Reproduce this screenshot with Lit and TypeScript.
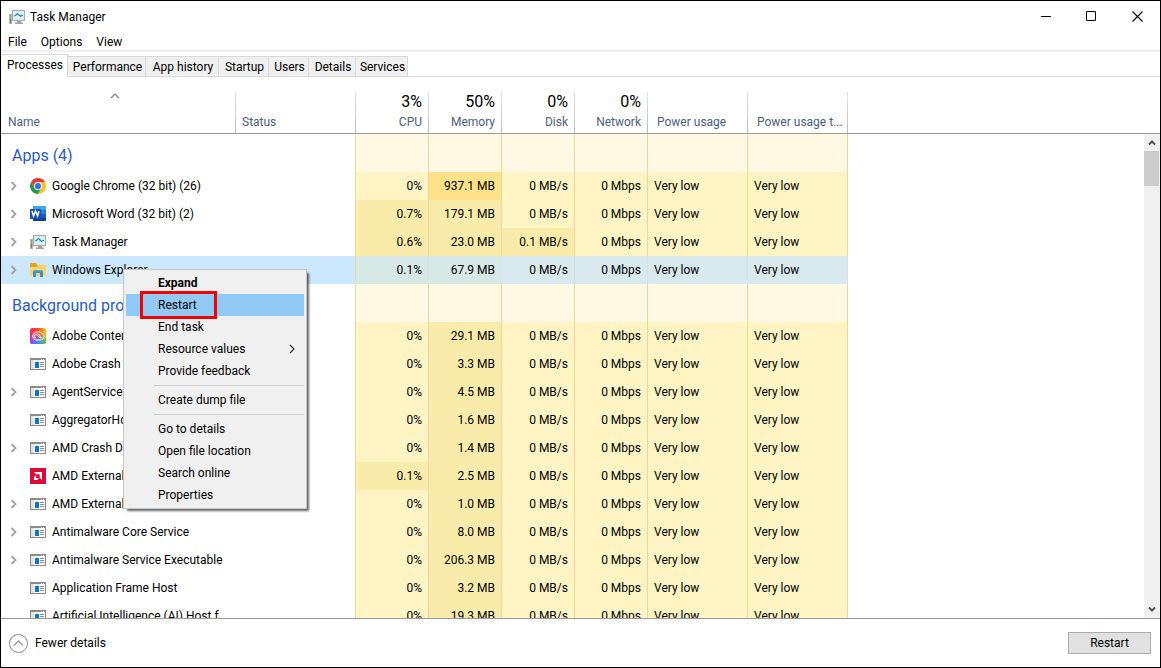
import { LitElement, html, css, svg, nothing } from "lit";
import { customElement, property, state } from "lit/decorators.js";
import { classMap } from "lit/directives/class-map.js";

type Heat = "low" | "mid" | "high";
interface Proc {
  name: string;
  icon: string;
  expandable: boolean;
  cpu: string;
  memory: string;
  disk?: string;
  cpuHeat?: Heat;
  memHeat?: Heat;
  diskHeat?: Heat;
  selected?: boolean;
}

const apps: Proc[] = [
  { name: "Google Chrome (32 bit) (26)", icon: "chrome", expandable: true, cpu: "0%", memory: "937.1 MB", memHeat: "high" },
  { name: "Microsoft Word (32 bit) (2)", icon: "word", expandable: true, cpu: "0.7%", memory: "179.1 MB", cpuHeat: "mid" },
  { name: "Task Manager", icon: "taskmgr", expandable: true, cpu: "0.6%", memory: "23.0 MB", disk: "0.1 MB/s", cpuHeat: "mid", diskHeat: "mid" },
  { name: "Windows Explorer", icon: "folder", expandable: true, cpu: "0.1%", memory: "67.9 MB", cpuHeat: "mid", selected: true },
];

const background: Proc[] = [
  { name: "Adobe Content Synchronizer", icon: "cloud", expandable: false, cpu: "0%", memory: "29.1 MB" },
  { name: "Adobe Crash Processor", icon: "exe", expandable: false, cpu: "0%", memory: "3.3 MB" },
  { name: "AgentService.exe", icon: "exe", expandable: true, cpu: "0%", memory: "4.5 MB" },
  { name: "AggregatorHost.exe", icon: "exe", expandable: false, cpu: "0%", memory: "1.6 MB" },
  { name: "AMD Crash Defender", icon: "exe", expandable: true, cpu: "0%", memory: "1.4 MB" },
  { name: "AMD External Events", icon: "amd", expandable: false, cpu: "0.1%", memory: "2.5 MB", cpuHeat: "mid" },
  { name: "AMD External Events", icon: "exe", expandable: true, cpu: "0%", memory: "1.0 MB" },
  { name: "Antimalware Core Service", icon: "exe", expandable: true, cpu: "0%", memory: "8.0 MB" },
  { name: "Antimalware Service Executable", icon: "exe", expandable: true, cpu: "0%", memory: "206.3 MB" },
  { name: "Application Frame Host", icon: "exe", expandable: false, cpu: "0%", memory: "3.2 MB" },
  { name: "Artificial Intelligence (AI) Host f", icon: "exe", expandable: false, cpu: "0%", memory: "19.3 MB" },
];

const glyphs: Record<string, unknown> = {
  chrome: svg`
    <circle cx="8" cy="8" r="8" fill="#fff"/>
    <path d="M8 4H14.93A8 8 0 0 1 8 16L11.46 10Z" fill="#fcc31e"/>
    <path d="M4.54 10 1.07 4A8 8 0 0 0 8 16L11.46 10Z" fill="#2a9a48"/>
    <path d="M1.07 4 4.54 10 8 4H14.93A8 8 0 0 0 1.07 4Z" fill="#e33b2e"/>
    <circle cx="8" cy="8" r="4" fill="#fff"/>
    <circle cx="8" cy="8" r="3.1" fill="#2f74e8"/>`,
  word: svg`
    <path d="M3 0h12a1 1 0 0 1 1 1v3H3z" fill="#41a5ee"/>
    <path d="M3 4h13v4H3z" fill="#2b7cd3"/>
    <path d="M3 8h13v4H3z" fill="#185abd"/>
    <path d="M3 12h13v2a1 1 0 0 1-1 1H3z" fill="#103f91"/>
    <rect x="0" y="3" width="11" height="10" rx=".8" fill="#1650b0"/>
    <path d="m2 5 1.500 5 2-5 2 5L9 5" fill="none" stroke="#fff" stroke-width="1.500"/>`,
  taskmgr: svg`
    <rect x="0" y="5" width="3" height="10" fill="#b4b4b4"/>
    <rect x="1" y="6" width="1" height="2" fill="#4fc04b"/>
    <rect x="1" y="9" width="1" height="5" fill="#7d7d7d"/>
    <rect x="3" y="1" width="13" height="11" fill="#a9a9a9"/>
    <rect x="4" y="2" width="11" height="9" fill="#e3e8ea"/>
    <rect x="5" y="3" width="9" height="7" fill="#d9f2fc"/>
    <path d="M5 7 6.500 6.500 8.500 4.500 11.500 7.500 12.500 6.500H14" fill="none" stroke="#258dbd" stroke-width="1.200"/>
    <path d="M8 12h4v1.500h2V15H6v-1.500h2z" fill="#a2a2a2"/>`,
  folder: svg`
    <path d="M0 1h6l1.500 2H16v11H0z" fill="#e8a41c"/>
    <path d="M0 5h7l1-2h8v11H0z" fill="#ffd464"/>
    <path d="M3 9.500 4.500 8h7L13 9.500V15h-3v-4H6v4H3z" fill="#3a8ddb"/>
    <path d="M3 9.500 4.500 8h7L13 9.500z" fill="#54a5e6"/>`,
  cloud: svg`
    <defs>
      <linearGradient id="warm" x1="0" y1="0" x2="1" y2="0">
        <stop offset="0" stop-color="#f42a5c"/><stop offset=".5" stop-color="#fb4a26"/>
        <stop offset="1" stop-color="#ffc414"/>
      </linearGradient>
      <linearGradient id="cool" x1="0" y1="0" x2="1" y2="0">
        <stop offset="0" stop-color="#a53ff0"/><stop offset=".5" stop-color="#3d8df5"/>
        <stop offset="1" stop-color="#4fcb46"/>
      </linearGradient>
      <linearGradient id="fade" x1="0" y1="0" x2="0" y2="1">
        <stop offset=".3" stop-color="#000"/><stop offset=".85" stop-color="#fff"/>
      </linearGradient>
      <mask id="lower"><rect width="16" height="16" fill="url(#fade)"/></mask>
    </defs>
    <rect width="16" height="16" rx="2.500" fill="url(#warm)"/>
    <rect width="16" height="16" rx="2.500" fill="url(#cool)" mask="url(#lower)"/>
    <path d="M6 12h4.500a3.700 3.700 0 0 0 .6-7.300A4.500 4.500 0 0 0 6 4.300 3.900 3.900 0 0 0 6 12Z" fill="none" stroke="#fff"/>
    <path d="M11.500 9.800H10.500C8.500 9.800 8 6.500 6 6.500a1.700 1.700 0 0 0 0 3.400M7.500 5.500c2 0 2 2.500 3.500 4.200" fill="none" stroke="#fff" stroke-width=".9"/>`,
  exe: svg`
    <rect x=".5" y="2.500" width="15" height="11" fill="#fff" stroke="#8a8a8a"/>
    <path d="M0 2h16v2H0z" fill="#8a8a8a"/>
    <path d="M11 3h1v1h-1zM13 3h1v1h-1z" fill="#ddd"/>
    <path d="M1 4h3v9H1z" fill="#e2e2e2"/>
    <path d="M5 6h4v6H5z" fill="#0078d7"/>
    <path d="M10 6h4v1h-4zM10 8h4v1h-4zM10 10h4v1h-4z" fill="#8f8f8f"/>`,
  amd: svg`
    <rect width="16" height="16" fill="#dc0a38"/>
    <path d="M4 4h8v8L9.700 9.700V6.300H6.300z" fill="#fff"/>
    <path d="M6 7v3h3l-2 2H4V9z" fill="#fff"/>`,
};

@customElement("tm-icon")
export class TmIcon extends LitElement {
  static styles = css`
    :host { display: block; flex: none; width: 16px; height: 16px; }
    .glyph { display: block; width: 16px; height: 16px; }
  `;
  @property() name = "exe";
  render() {
    return html`<svg class="glyph" viewBox="0 0 16 16" aria-hidden="true">${glyphs[this.name]}</svg>`;
  }
}

@customElement("tm-context-menu")
export class TmContextMenu extends LitElement {
  static styles = css`
    :host { display: block; }
    .menu {
      box-sizing: border-box; width: 184px; padding: 2px;
      background: #f0f0f0; border: 1px solid #c6c6c6;
      box-shadow: 3px 3px 2px -1px rgba(0, 0, 0, 0.6);
    }
    .item {
      position: relative; box-sizing: border-box; display: flex; align-items: center; justify-content: space-between;
      width: 100%; height: 22px; padding: 0 8px 0 32px; border: 0; background: none;
      font: inherit; color: #000; text-align: left; white-space: nowrap;
    }
    .item.default { font-weight: 700; }
    .item.hot { background: #91c9f7; }
    .arrow { width: 8px; height: 10px; }
    .separator { height: 1px; margin: 3px 0 3px 28px; border: 0; background: #d2d2d2; }
    .marker { position: absolute; inset: -3px auto -3px 14px; width: 71px; border: 3px solid #f40000; pointer-events: none; }
    .marked { z-index: 1; }
  `;
  render() {
    const item = (label: string, opts: { bold?: boolean; hot?: boolean; sub?: boolean } = {}) => html`
      <button role="menuitem" class=${classMap({ item: true, default: !!opts.bold, hot: !!opts.hot, marked: !!opts.hot })}>
        ${label}
        ${opts.sub ? html`<svg class="arrow" viewBox="0 0 8 10" aria-hidden="true"><path d="M2 1l4 4-4 4" fill="none" stroke="#333" stroke-width="1.200"/></svg>` : nothing}
        ${opts.hot ? html`<span class="marker"></span>` : nothing}
      </button>`;
    return html`
      <div class="menu" role="menu">
        ${item("Expand", { bold: true })}
        ${item("Restart", { hot: true })}
        ${item("End task")}
        ${item("Resource values", { sub: true })}
        ${item("Provide feedback")}
        <hr class="separator" />
        ${item("Create dump file")}
        <hr class="separator" />
        ${item("Go to details")}
        ${item("Open file location")}
        ${item("Search online")}
        ${item("Properties")}
      </div>`;
  }
}

@customElement("app-root")
export class AppRoot extends LitElement {
  static styles = css`
    :host {
      display: block; height: 100vh;
      font: 12px/16px Roboto, "Noto Sans", sans-serif; color: #000;
    }
    button { font: inherit; color: inherit; padding: 0; border: 0; background: none; }
    .window {
      position: relative; box-sizing: border-box; height: 100%;
      display: flex; flex-direction: column; background: #fff; border: 1px solid #000; overflow: hidden;
    }
    .titlebar { display: flex; align-items: center; height: 31px; padding-left: 8px; }
    .title { flex: 1; margin: 0 0 0 5px; font: inherit; }
    .control { width: 46px; height: 30px; display: grid; place-items: center; }
    .control-glyph { display: block; width: 11px; height: 11px; }
    .menubar { display: flex; gap: 14px; height: 17px; padding: 1px 7px 0; border-bottom: 2px solid #f0f0f0; }
    .tabs { display: grid; grid-template-columns: 67px 78px 73px 50px 40px 47px 52px 1fr; align-items: end; height: 25px; }
    .tab {
      box-sizing: border-box; height: 21px; padding-left: 2px; background: #f0f0f0; white-space: nowrap;
      border: 1px solid #d9d9d9; border-left: 0;
    }
    .tab.active { height: 23px; padding-bottom: 2px; background: #fff; border-bottom: 0; }
    .tab-rest { height: 1px; background: #d9d9d9; }

    .panel { flex: 1; min-height: 0; display: flex; padding-top: 15px; }
    .viewport { flex: 1; min-width: 0; overflow: hidden; }
    .grid { width: 100%; table-layout: fixed; border-collapse: separate; border-spacing: 0; }
    .col-name { width: 235px; }
    .col-status { width: 120px; }
    .col-num { width: 73px; }
    .col-power { width: 100px; }
    .head {
      height: 41px; padding: 0; font-weight: 400; color: #4c607f; border-bottom: 1px solid #9b9b9b;
      background: linear-gradient(#e3e3e3, #bdbdbd) right / 1px 100% no-repeat; vertical-align: bottom;
    }
    .head.rest { background: none; }
    .sort {
      display: flex; flex-direction: column; justify-content: flex-end; box-sizing: border-box;
      width: 100%; height: 41px; padding: 0 6px 3px 6px; text-align: left; white-space: nowrap;
    }
    .sort.named { padding: 0 14px 3px 7px; }
    .sort.number { padding-right: 7px; text-align: right; }
    .sort.power { padding-left: 9px; }
    .caret { align-self: center; width: 10px; height: 6px; margin-bottom: 15px; }
    .total { font-size: 16px; line-height: 20px; color: #000; margin-bottom: 2px; }

    .row { height: 28px; }
    .cell { box-sizing: border-box; height: 28px; padding: 0 6px; white-space: nowrap; }
    .cell.name { padding: 0; overflow: hidden; }
    .name-box { display: grid; grid-template-columns: 29px 16px 1fr; align-items: center; font-weight: 400; text-align: left; }
    .label { padding-left: 6px; }
    .expander { display: grid; place-items: center; width: 11px; height: 16px; margin-left: 7px; }
    .chevron { width: 7px; height: 10px; }
    .heat { background: #fff4c4; border-right: 1px solid #ecd79f; text-align: right; }
    .heat.text { text-align: left; }
    .heat.mid { background: #f9ecaa; }
    .heat.high { background: #ffe188; }
    .edge { border-right: 1px solid #ecd79f; }
    .selected .cell.name, .selected .plain { background: #cce8ff; }
    .selected .heat { background: #d9eaee; border-color: #d8dfe6; }
    .selected .heat.mid { background: #d7e9e6; }
    .group .cell { height: 38px; }
    .group .heat { background: #fff9e4; }
    .group-name { padding: 6px 0 0 11px; font-size: 16px; line-height: 22px; font-weight: 400; color: #2a5dbf; text-align: left; }

    .scrollbar { width: 16px; display: flex; flex-direction: column; }
    .scroll-head { height: 41px; border-bottom: 1px solid #9b9b9b; }
    .scroll-button { width: 16px; height: 17px; display: grid; place-items: center; background: #f0f0f0; }
    .scroll-glyph { width: 8px; height: 7px; }
    .track { flex: 1; background: #f0f0f0; }
    .thumb { width: 15px; height: 35px; background: #cdcdcd; }

    .footer {
      display: flex; align-items: center; justify-content: space-between;
      height: 48px; padding: 0 9px 0 7px; border-top: 1px solid #9b9b9b;
    }
    .fewer { display: flex; align-items: center; gap: 6px; }
    .round { width: 21px; height: 21px; }
    .action { box-sizing: border-box; width: 83px; height: 22px; background: #e1e1e1; border: 1px solid #adadad; }
    .context { position: absolute; left: 122px; top: 268px; }
  `;

  @state() private tab = "Processes";

  private row(p: Proc) {
    return html`
      <tr class=${classMap({ row: true, selected: !!p.selected })}>
        <th scope="row" class="cell name">
          <div class="name-box">
            ${p.expandable
              ? html`<button class="expander" aria-label="Expand ${p.name}"><svg class="chevron" viewBox="0 0 7 10" aria-hidden="true"><path d="M1.500 1 5.500 5 1.500 9" fill="none" stroke="#a2a2a2" stroke-width="1.800"/></svg></button>`
              : html`<span></span>`}
            <tm-icon name=${p.icon}></tm-icon>
            <span class="label">${p.name}</span>
          </div>
        </th>
        <td class="cell plain edge"></td>
        <td class="cell heat ${p.cpuHeat ?? "low"}">${p.cpu}</td>
        <td class="cell heat ${p.memHeat ?? "mid"}">${p.memory}</td>
        <td class="cell heat ${p.diskHeat ?? "low"}">${p.disk ?? "0 MB/s"}</td>
        <td class="cell heat">0 Mbps</td>
        <td class="cell heat text">Very low</td>
        <td class="cell heat text">Very low</td>
        <td></td>
      </tr>`;
  }

  private group(title: string, rows: Proc[]) {
    return html`
      <tbody>
        <tr class="group">
          <th class="cell name" scope="rowgroup"><div class="group-name">${title}</div></th>
          <td class="cell edge"></td>
          ${[0, 1, 2, 3, 4, 5].map(() => html`<td class="cell heat"></td>`)}
          <td></td>
        </tr>
        ${rows.map((p) => this.row(p))}
      </tbody>`;
  }

  render() {
    const tabs = ["Processes", "Performance", "App history", "Startup", "Users", "Details", "Services"];
    const totals = [["3%", "CPU"], ["50%", "Memory"], ["0%", "Disk"], ["0%", "Network"]];
    return html`
      <main class="window">
        <header class="titlebar">
          <tm-icon name="taskmgr"></tm-icon>
          <h1 class="title">Task Manager</h1>
          <button class="control" aria-label="Minimize"><svg class="control-glyph" viewBox="0 0 11 11"><path d="M1 5h10v1H1z"/></svg></button>
          <button class="control" aria-label="Maximize"><svg class="control-glyph" viewBox="0 0 11 11"><path d="M.5.5h9v9h-9z" fill="none" stroke="#000"/></svg></button>
          <button class="control" aria-label="Close"><svg class="control-glyph" viewBox="0 0 11 11"><path d="m.5.5 10 10m0-10-10 10" stroke="#000" stroke-width="1.100"/></svg></button>
        </header>
        <nav class="menubar">
          <button>File</button><button>Options</button><button>View</button>
        </nav>
        <div class="tabs" role="tablist">
          ${tabs.map((t) => html`<button role="tab" aria-selected=${t === this.tab} @click=${() => (this.tab = t)}
            class=${classMap({ tab: true, active: t === this.tab })}>${t}</button>`)}
          <span class="tab-rest"></span>
        </div>
        <section class="panel">
          <div class="viewport">
            <table class="grid">
              <colgroup>
                <col class="col-name" /><col class="col-status" />
                <col class="col-num" /><col class="col-num" /><col class="col-num" /><col class="col-num" />
                <col class="col-power" /><col class="col-power" /><col />
              </colgroup>
              <thead>
                <tr>
                  <th class="head" scope="col" aria-sort="ascending">
                    <button class="sort named">
                      <svg class="caret" viewBox="0 0 10 6" aria-hidden="true"><path d="M1 5l4-4 4 4" fill="none" stroke="#7c8795" stroke-width="1.200"/></svg>
                      <span>Name</span>
                    </button>
                  </th>
                  <th class="head" scope="col"><button class="sort">Status</button></th>
                  ${totals.map(([n, l]) => html`<th class="head" scope="col"><button class="sort number"><span class="total">${n}</span><span>${l}</span></button></th>`)}
                  <th class="head" scope="col"><button class="sort power">Power usage</button></th>
                  <th class="head" scope="col"><button class="sort power">Power usage t...</button></th>
                  <td class="head rest"></td>
                </tr>
              </thead>
              ${this.group("Apps (4)", apps)}
              ${this.group("Background processes", background)}
            </table>
          </div>
          <div class="scrollbar">
            <div class="scroll-head"></div>
            <button class="scroll-button" aria-label="Scroll up"><svg class="scroll-glyph" viewBox="0 0 8 7"><path d="M1 5.500l3-3 3 3" fill="none" stroke="#555" stroke-width="2"/></svg></button>
            <div class="track"><div class="thumb"></div></div>
            <button class="scroll-button" aria-label="Scroll down"><svg class="scroll-glyph" viewBox="0 0 8 7"><path d="M1 1.500l3 3 3-3" fill="none" stroke="#555" stroke-width="2"/></svg></button>
          </div>
        </section>
        <footer class="footer">
          <button class="fewer">
            <svg class="round" viewBox="0 0 21 21" aria-hidden="true"><circle cx="10.500" cy="10.500" r="9" fill="none" stroke="#8b8b8b"/><path d="m6 12.500 4.500-4.500 4.500 4.500" fill="none" stroke="#999" stroke-width="1.400"/></svg>
            Fewer details
          </button>
          <button class="action">Restart</button>
        </footer>
        <tm-context-menu class="context"></tm-context-menu>
      </main>`;
  }
}
